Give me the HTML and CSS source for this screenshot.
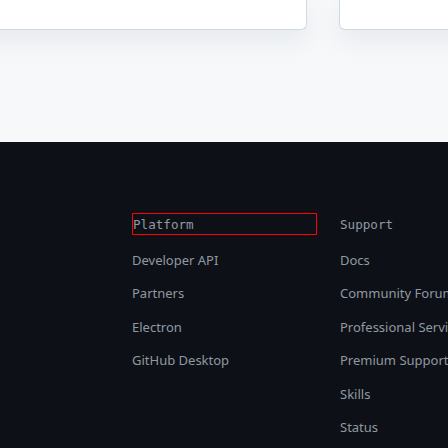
FILE: index.html
```html
<!DOCTYPE html>
<html>
<head>
<meta charset="utf-8">
<link rel="stylesheet" href="styles.css">
</head>
<body>
<div class="top">
  <div class="cards">
    <div class="card"></div>
    <div class="card"></div>
  </div>
</div>
<footer class="footer">
  <div class="cols">
    <div class="col">
      <h3 class="heading heading-outlined">Platform</h3>
      <ul class="links">
        <li>Developer API</li>
        <li>Partners</li>
        <li>Electron</li>
        <li>GitHub Desktop</li>
      </ul>
    </div>
    <div class="col">
      <h3 class="heading">Support</h3>
      <ul class="links">
        <li>Docs</li>
        <li>Community Forum</li>
        <li>Professional Services</li>
        <li>Premium Support</li>
        <li>Skills</li>
        <li>Status</li>
      </ul>
    </div>
  </div>
</footer>
</body>
</html>
```
FILE: styles.css
```css
html, body {
  margin: 0;
  padding: 0;
  overflow: hidden;
  height: 448px;
  background: #0d1117;
}
.top {
  height: 142px;
  background: #f6f8fa;
  overflow: hidden;
}
.cards {
  display: flex;
  gap: 32px;
  margin-left: -30px;
}
.card {
  flex: 0 0 335px;
  height: 29px;
  background: #ffffff;
  border: 1px solid #d1d9e0;
  border-top: none;
  border-radius: 0 0 6px 6px;
  box-shadow: 0 10px 24px rgba(140, 149, 159, 0.14);
}
.footer {
  padding: 71px 0 0 132px;
}
.cols {
  display: grid;
  grid-template-columns: 185px 200px;
  column-gap: 23px;
  white-space: nowrap;
}
.heading {
  margin: 0;
  height: 20px;
  font-family: "DejaVu Sans Mono", monospace;
  font-size: 12.6px;
  font-weight: normal;
  line-height: 21px;
  color: #9198a1;
  border: 1px solid transparent;
  border-left: none;
}
.heading-outlined {
  border: 1px solid #ff0000;
}
.links {
  list-style: none;
  margin: 15px 0 0;
  padding: 0;
  font-family: "Noto Sans", sans-serif;
  font-size: 13px;
  line-height: 20px;
  color: #9198a1;
}
.links li {
  margin-bottom: 13.4px;
}
```
